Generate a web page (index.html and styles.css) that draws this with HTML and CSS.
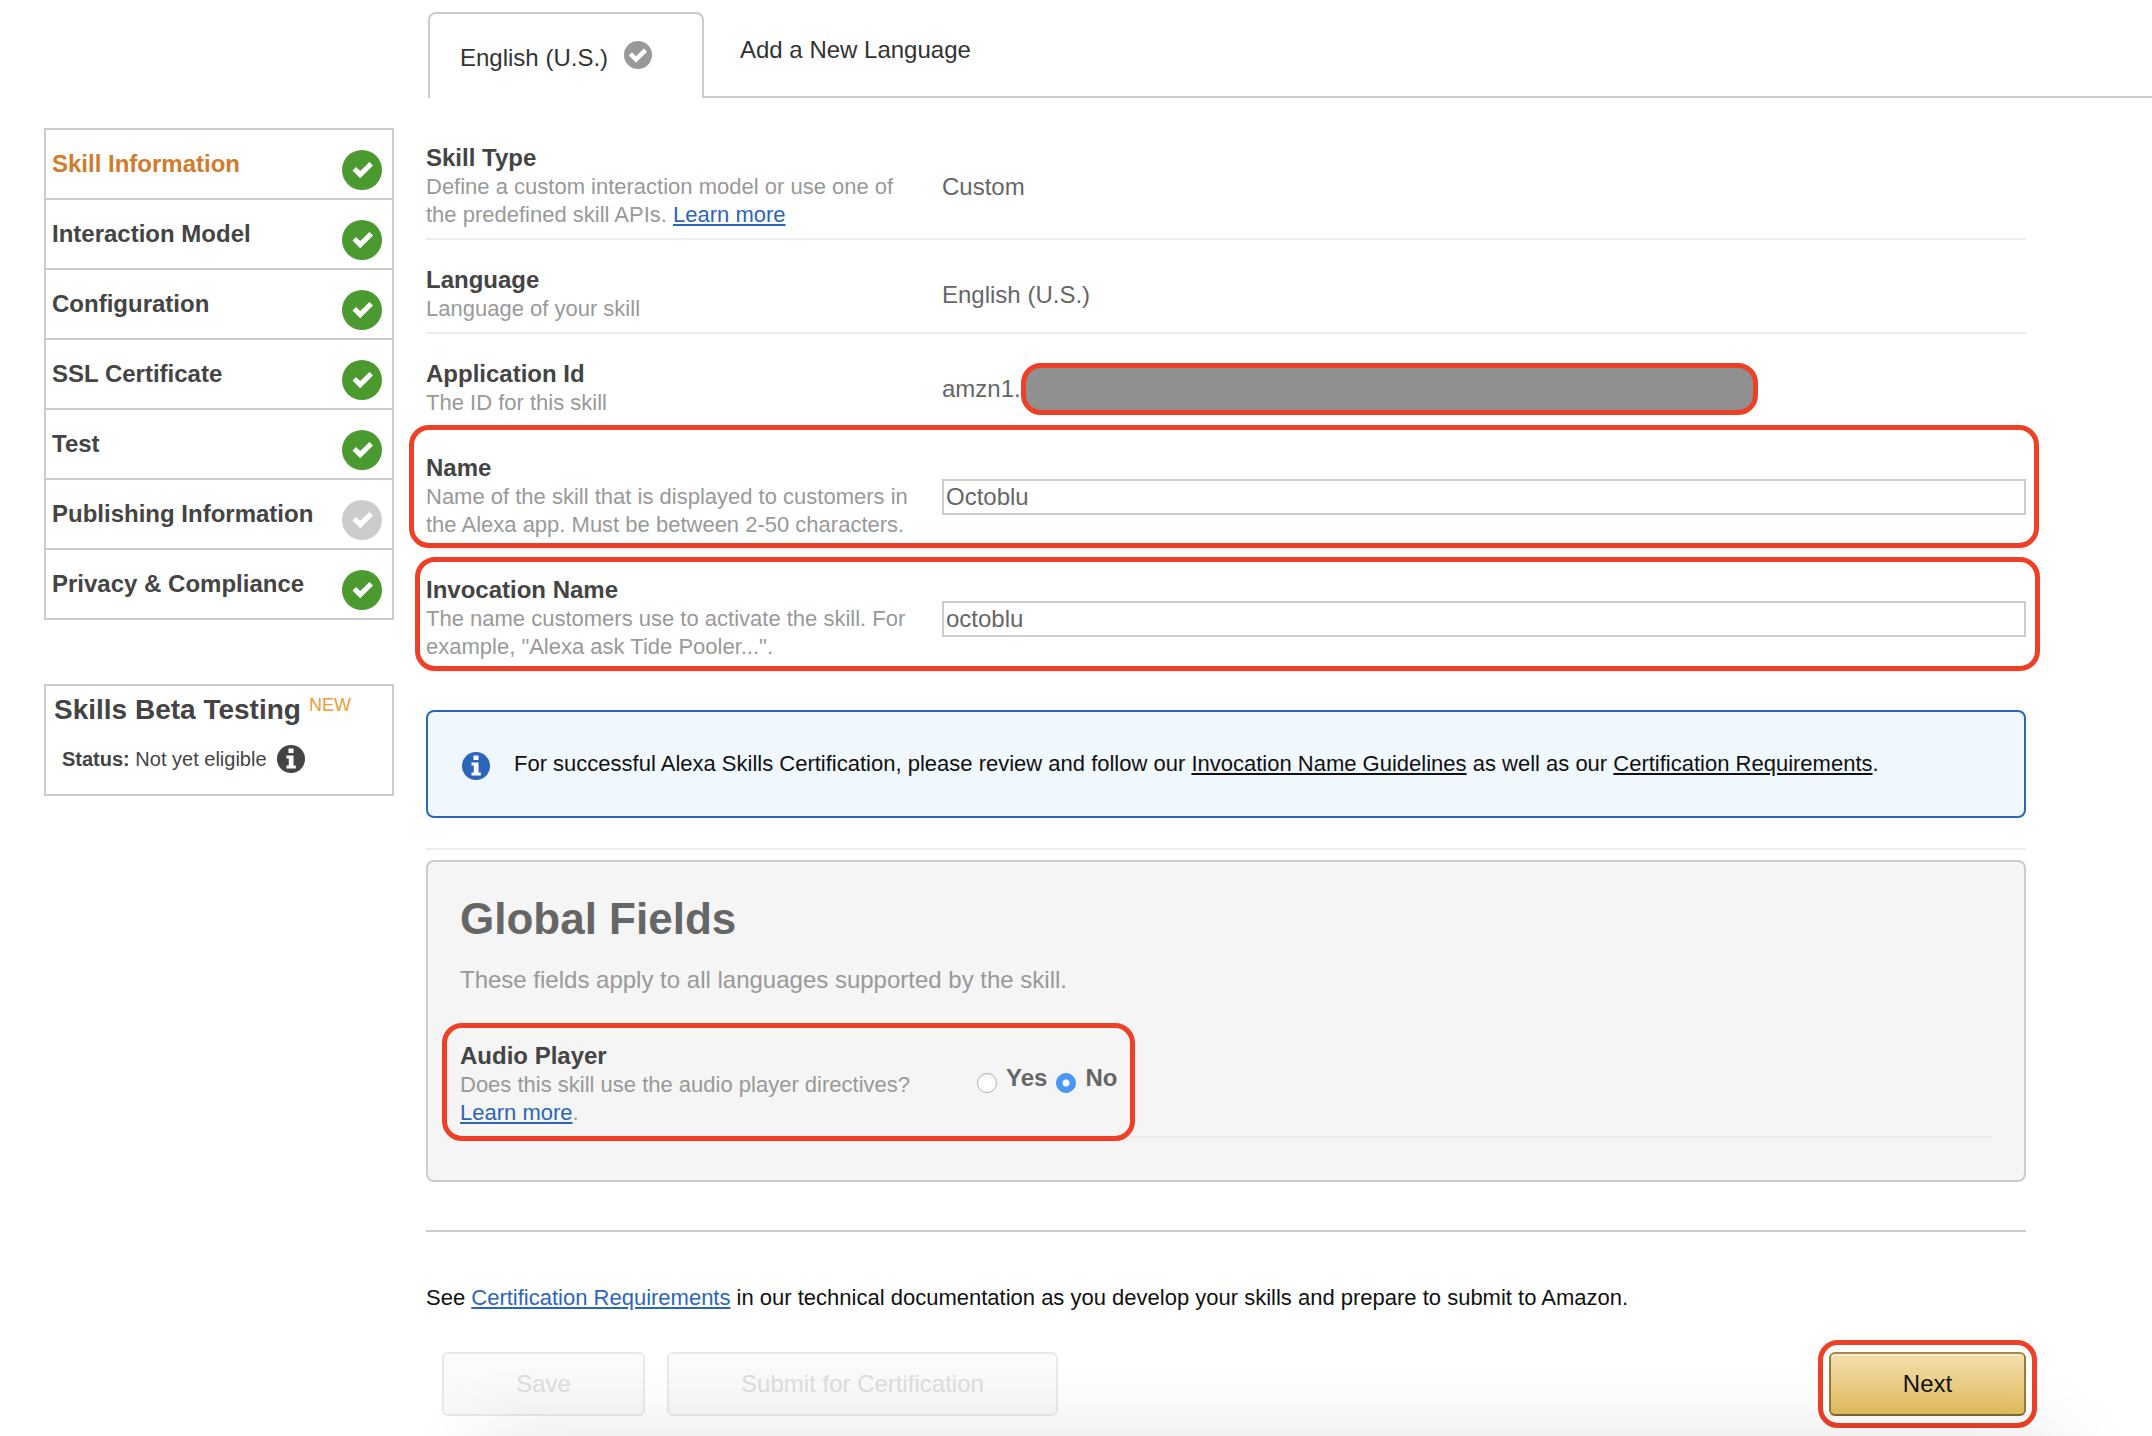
FILE: index.html
```html
<!DOCTYPE html>
<html lang="en">
<head>
    <meta charset="UTF-8">
    <meta name="viewport" content="width=device-width, initial-scale=1.0">
    <title>Skill Information</title>
    <link rel="stylesheet" href="styles.css">
</head>
<body>

<!-- Shared icons -->
<svg class="icon-defs" aria-hidden="true">
    <symbol id="icon-check" viewBox="0 0 40 40">
        <circle cx="20" cy="20" r="20" fill="currentColor"/>
        <path d="M10.500 20.500 L14 17 L18.200 21 L27.500 12 L31 15.500 L18.200 28.300 Z" fill="#fff"/>
    </symbol>
    <symbol id="icon-check-small" viewBox="0 0 28 28">
        <circle cx="14" cy="14" r="14" fill="currentColor"/>
        <path d="M4.800 14.500 L8 11.300 L12 15.300 L19.800 7.500 L23 10.700 L12 21.700 Z" fill="#fff"/>
    </symbol>
    <symbol id="icon-info" viewBox="0 0 28 28">
        <circle cx="14" cy="14" r="14" fill="currentColor"/>
        <path d="M11.500 3.500 h5 v4.500 h-5 Z M9.500 10.500 h7 v10 h2.300 v3 h-9.300 v-3 h2.300 v-7 h-2.300 Z" fill="#fff"/>
    </symbol>
</svg>

<!-- Language Tabs -->
<nav class="tabs">
    <a href="#" class="tab tab-active">English (U.S.) <svg class="icon"><use href="#icon-check-small"/></svg></a>
    <a href="#" class="tab">Add a New Language</a>
</nav>

<div class="container">

    <!-- Sidebar -->
    <aside class="sidebar">
        <ul class="steps">
            <li><a href="#" class="active">Skill Information <svg class="step-icon"><use href="#icon-check"/></svg></a></li>
            <li><a href="#">Interaction Model <svg class="step-icon"><use href="#icon-check"/></svg></a></li>
            <li><a href="#">Configuration <svg class="step-icon"><use href="#icon-check"/></svg></a></li>
            <li><a href="#">SSL Certificate <svg class="step-icon"><use href="#icon-check"/></svg></a></li>
            <li><a href="#">Test <svg class="step-icon"><use href="#icon-check"/></svg></a></li>
            <li><a href="#">Publishing Information <svg class="step-icon pending"><use href="#icon-check"/></svg></a></li>
            <li><a href="#">Privacy &amp; Compliance <svg class="step-icon"><use href="#icon-check"/></svg></a></li>
        </ul>

        <div class="beta">
            <h3>Skills Beta Testing <span class="new">NEW</span></h3>
            <p><span><b>Status:</b> Not yet eligible</span> <svg class="icon"><use href="#icon-info"/></svg></p>
        </div>
    </aside>

    <!-- Skill Form -->
    <main>
        <form>
            <div class="field">
                <div class="info">
                    <h4>Skill Type</h4>
                    <p>Define a custom interaction model or use one of the predefined skill APIs. <a href="#">Learn more</a></p>
                </div>
                <div class="value">Custom</div>
            </div>

            <div class="field">
                <div class="info">
                    <h4>Language</h4>
                    <p>Language of your skill</p>
                </div>
                <div class="value">English (U.S.)</div>
            </div>

            <div class="field">
                <div class="info">
                    <h4>Application Id</h4>
                    <p>The ID for this skill</p>
                </div>
                <div class="value">amzn1.<span class="redacted"></span></div>
            </div>

            <div class="field">
                <div class="info">
                    <h4><label for="skillName">Name</label></h4>
                    <p>Name of the skill that is displayed to customers in the Alexa app. Must be between 2-50 characters.</p>
                </div>
                <div class="value"><input type="text" id="skillName" value="Octoblu"></div>
                <span class="highlight highlight-name"></span>
            </div>

            <div class="field">
                <div class="info">
                    <h4><label for="invocationName">Invocation Name</label></h4>
                    <p>The name customers use to activate the skill. For example, "Alexa ask Tide Pooler...".</p>
                </div>
                <div class="value"><input type="text" id="invocationName" value="octoblu"></div>
                <span class="highlight highlight-invocation"></span>
            </div>

            <div class="alert">
                <svg class="icon"><use href="#icon-info"/></svg>
                <p>For successful Alexa Skills Certification, please review and follow our <a href="#">Invocation Name Guidelines</a> as well as our <a href="#">Certification Requirements</a>.</p>
            </div>

            <!-- Global Fields -->
            <section class="global">
                <h2>Global Fields</h2>
                <p class="intro">These fields apply to all languages supported by the skill.</p>

                <div class="field">
                    <div class="info">
                        <h4>Audio Player</h4>
                        <p>Does this skill use the audio player directives? <a href="#">Learn more</a>.</p>
                    </div>
                    <div class="value choices">
                        <input type="radio" name="audioPlayer" id="audioYes">
                        <label for="audioYes">Yes</label>
                        <input type="radio" name="audioPlayer" id="audioNo" checked>
                        <label for="audioNo">No</label>
                    </div>
                    <span class="highlight highlight-audio"></span>
                </div>
            </section>

            <p class="note">See <a href="#">Certification Requirements</a> in our technical documentation as you develop your skills and prepare to submit to Amazon.</p>

            <div class="actions">
                <button type="button" class="btn-save" disabled>Save</button>
                <button type="button" class="btn-submit" disabled>Submit for Certification</button>
                <div class="next">
                    <button type="button" class="btn-next">Next</button>
                    <span class="highlight highlight-next"></span>
                </div>
            </div>
        </form>
    </main>

</div>

<div class="bottom-shadow"></div>

</body>
</html>
```

FILE: styles.css
```css
* {
    box-sizing: border-box;
}

body {
    font-family: Arial, "Liberation Sans", sans-serif;
    font-size: 24px;
    line-height: 28px;
    color: #444;
    background-color: #fff;
    margin: 0;
}

h2, h3, h4, p, ul {
    margin: 0;
    padding: 0;
}

a {
    color: #2b66b8;
}

.icon-defs {
    display: none;
}

.icon {
    width: 28px;
    height: 28px;
    flex: none;
}

/* Tabs */
.tabs {
    display: flex;
    padding: 12px 0 0 428px;
}

.tab {
    flex: 1;
    height: 86px;
    padding: 24px 36px;
    border-bottom: 2px solid #ccc;
    color: #333;
    text-decoration: none;
}

.tab-active {
    display: flex;
    flex: none;
    gap: 16px;
    width: 276px;
    padding: 30px;
    border: 2px solid #ccc;
    border-bottom: none;
    border-radius: 8px 8px 0 0;
}

.tab-active .icon {
    color: #999;
    margin-top: -3px;
}

.container {
    display: grid;
    grid-template-columns: 350px 1fr;
    gap: 32px;
    align-items: start;
    padding: 20px 126px 16px 44px;
}

/* Sidebar */
.sidebar {
    padding-top: 10px;
}

.steps {
    list-style: none;
    border: 2px solid #ccc;
}

.steps li + li {
    border-top: 2px solid #ccc;
}

.steps a {
    display: flex;
    justify-content: space-between;
    padding: 20px 10px 8px 6px;
    color: #444;
    font-weight: bold;
    text-decoration: none;
}

.steps a.active {
    color: #d27b2b;
}

.step-icon {
    width: 40px;
    height: 40px;
    color: #4a9a30;
}

.step-icon.pending {
    color: #ccc;
}

.beta {
    height: 112px;
    margin-top: 64px;
    padding: 10px 8px;
    border: 2px solid #ccc;
}

.beta h3 {
    display: flex;
    gap: 8px;
    font-size: 28px;
}

.new {
    font-size: 18px;
    font-weight: normal;
    line-height: 18px;
    color: #f09a36;
}

.beta p {
    display: flex;
    align-items: center;
    gap: 10px;
    margin-top: 21px;
    padding-left: 8px;
    font-size: 20px;
}

/* Form fields */
.field {
    position: relative;
    display: flex;
    align-items: center;
    gap: 26px;
    padding: 26px 0 9px;
    border-bottom: 2px solid #eee;
}

.info {
    flex: none;
    width: 490px;
}

.info h4 {
    margin-bottom: 1px;
    font-size: 24px;
}

.info p {
    font-size: 22px;
    color: #999;
}

.value {
    display: flex;
    align-items: center;
    flex: 1;
    color: #666;
}

input[type="text"] {
    width: 100%;
    height: 36px;
    padding: 0 2px;
    border: 2px solid #ccc;
    font: inherit;
    color: #666;
    background-color: #fff;
}

.redacted {
    width: 68%;
    height: 52px;
    border: 5px solid #ee4027;
    border-radius: 20px;
    background-color: #909090;
}

/* Red callouts drawn over the form */
.highlight {
    position: absolute;
    border: 5px solid #ee4027;
    border-radius: 20px;
    pointer-events: none;
}

.highlight-name {
    top: -3px;
    right: -13px;
    bottom: 0;
    left: -17px;
}

.highlight-invocation {
    top: 7px;
    right: -14px;
    bottom: -1px;
    left: -11px;
}

.highlight-audio {
    top: 7px;
    bottom: -5px;
    left: -18px;
    width: 693px;
}

.highlight-next {
    top: -12px;
    right: -11px;
    bottom: -12px;
    left: -11px;
}

.alert {
    display: flex;
    align-items: center;
    gap: 24px;
    height: 108px;
    margin-top: 38px;
    padding: 0 34px;
    border: 2px solid #2b66b8;
    border-radius: 8px;
    background-color: #f0f7fd;
    font-size: 22px;
    color: #111;
}

.alert .icon {
    margin-top: 4px;
    color: #2b66b8;
}

.alert a {
    color: #111;
}

/* Global fields */
.global {
    position: relative;
    margin-top: 42px;
    padding: 32px 32px 42px;
    border: 2px solid #ccc;
    border-radius: 8px;
    background-color: #f5f5f5;
}

.global::before {
    content: "";
    position: absolute;
    top: -14px;
    right: -2px;
    left: -2px;
    border-top: 2px solid #eee;
}

.global h2 {
    font-size: 44px;
    line-height: 50px;
    color: #666;
}

.global .intro {
    margin: 22px 0;
    color: #999;
}

.global .field {
    border-color: #ebebeb;
}

.choices {
    gap: 9px;
    padding-left: 1px;
    font-weight: bold;
}

.choices label {
    align-self: flex-start;
}

input[type="radio"] {
    appearance: none;
    flex: none;
    width: 20px;
    height: 20px;
    margin: 9px 0 13px;
    border: 1px solid #b0b0b0;
    border-radius: 50%;
    background: linear-gradient(#f2f2f2, #fff 40%);
}

input[type="radio"]:checked {
    border-color: #3f8cf0;
    background: radial-gradient(circle, #fff 3px, #4c96f7 4px);
}

/* Footer */
.note {
    margin-top: 48px;
    padding-top: 52px;
    border-top: 2px solid #ccc;
    font-size: 22px;
    color: #111;
}

.actions {
    display: flex;
    gap: 22px;
    margin-top: 40px;
    padding-left: 16px;
}

button {
    height: 64px;
    border: 2px solid #e9e9e9;
    border-radius: 6px;
    font: inherit;
    color: #ddd;
    background: linear-gradient(#fbfbfd, #f8f8fa);
}

.btn-save {
    width: 203px;
}

.btn-submit {
    width: 391px;
}

.next {
    position: relative;
    margin-left: auto;
}

.btn-next {
    display: block;
    width: 197px;
    border-color: #a28a42 #957e3c #7f6a31;
    color: #111;
    background: linear-gradient(#f3dfae, #e4bd5e);
    box-shadow: inset 0 2px 0 #f8ebcb;
}

/* Shade along the bottom edge of the window */
.bottom-shadow {
    position: fixed;
    top: 100%;
    right: 90px;
    left: 480px;
    height: 80px;
    box-shadow: 0 0 80px rgba(0, 0, 0, 0.11);
    pointer-events: none;
}
```
